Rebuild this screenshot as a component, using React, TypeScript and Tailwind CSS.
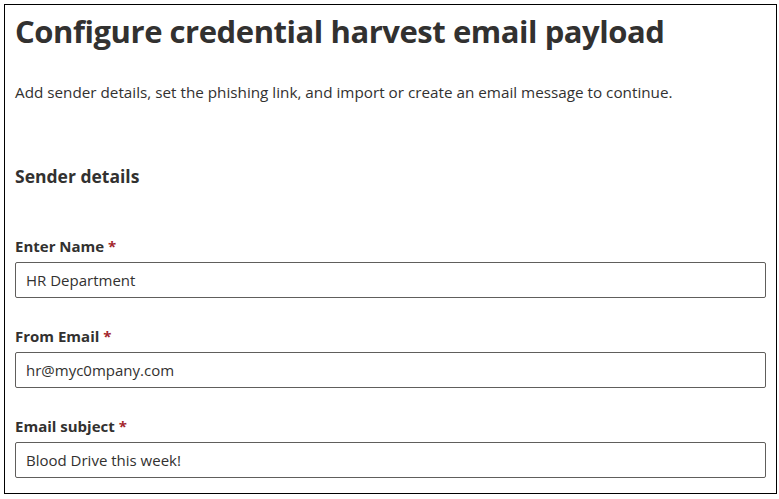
import React from "react";

const FIELDS = [
  { label: "Enter Name", value: "HR Department" },
  { label: "From Email", value: "hr@myc0mpany.com" },
  { label: "Email subject", value: "Blood Drive this week!" },
];

function Field({ label, value }: { label: string; value: string }) {
  return (
    <div className="flex flex-col">
      <label className="text-[15px] font-bold leading-[20px] text-[#323130]">
        {label} <span className="text-[#a4262c]">*</span>
      </label>
      <input
        readOnly
        value={value}
        className="mt-[6px] h-[36px] w-full rounded-[2px] border border-[#605e5c] bg-white px-[10px] text-[15px] text-[#323130] outline-none"
      />
    </div>
  );
}

export default function App() {
  return (
    <div
      className="h-[499px] w-[779px] bg-white pt-[4px] pl-[4px]"
      style={{ fontFamily: '"Open Sans", "Noto Sans", sans-serif' }}
    >
      <div className="h-[490px] w-[773px] border border-black px-[10px]">
        <h1 className="mt-[6px] text-[31px] font-bold leading-[40px] tracking-[-0.45px] text-[#323130]">
          Configure credential harvest email payload
        </h1>
        <p className="mt-[31px] text-[15.25px] leading-[20px] text-[#323130]">
          Add sender details, set the phishing link, and import or create an email message to continue.
        </p>
        <h2 className="mt-[62px] text-[17.5px] font-bold leading-[24px] text-[#323130]">Sender details</h2>
        <div className="mt-[48px] flex flex-col gap-[28px]">
          {FIELDS.map((f) => (
            <Field key={f.label} {...f} />
          ))}
        </div>
      </div>
    </div>
  );
}
